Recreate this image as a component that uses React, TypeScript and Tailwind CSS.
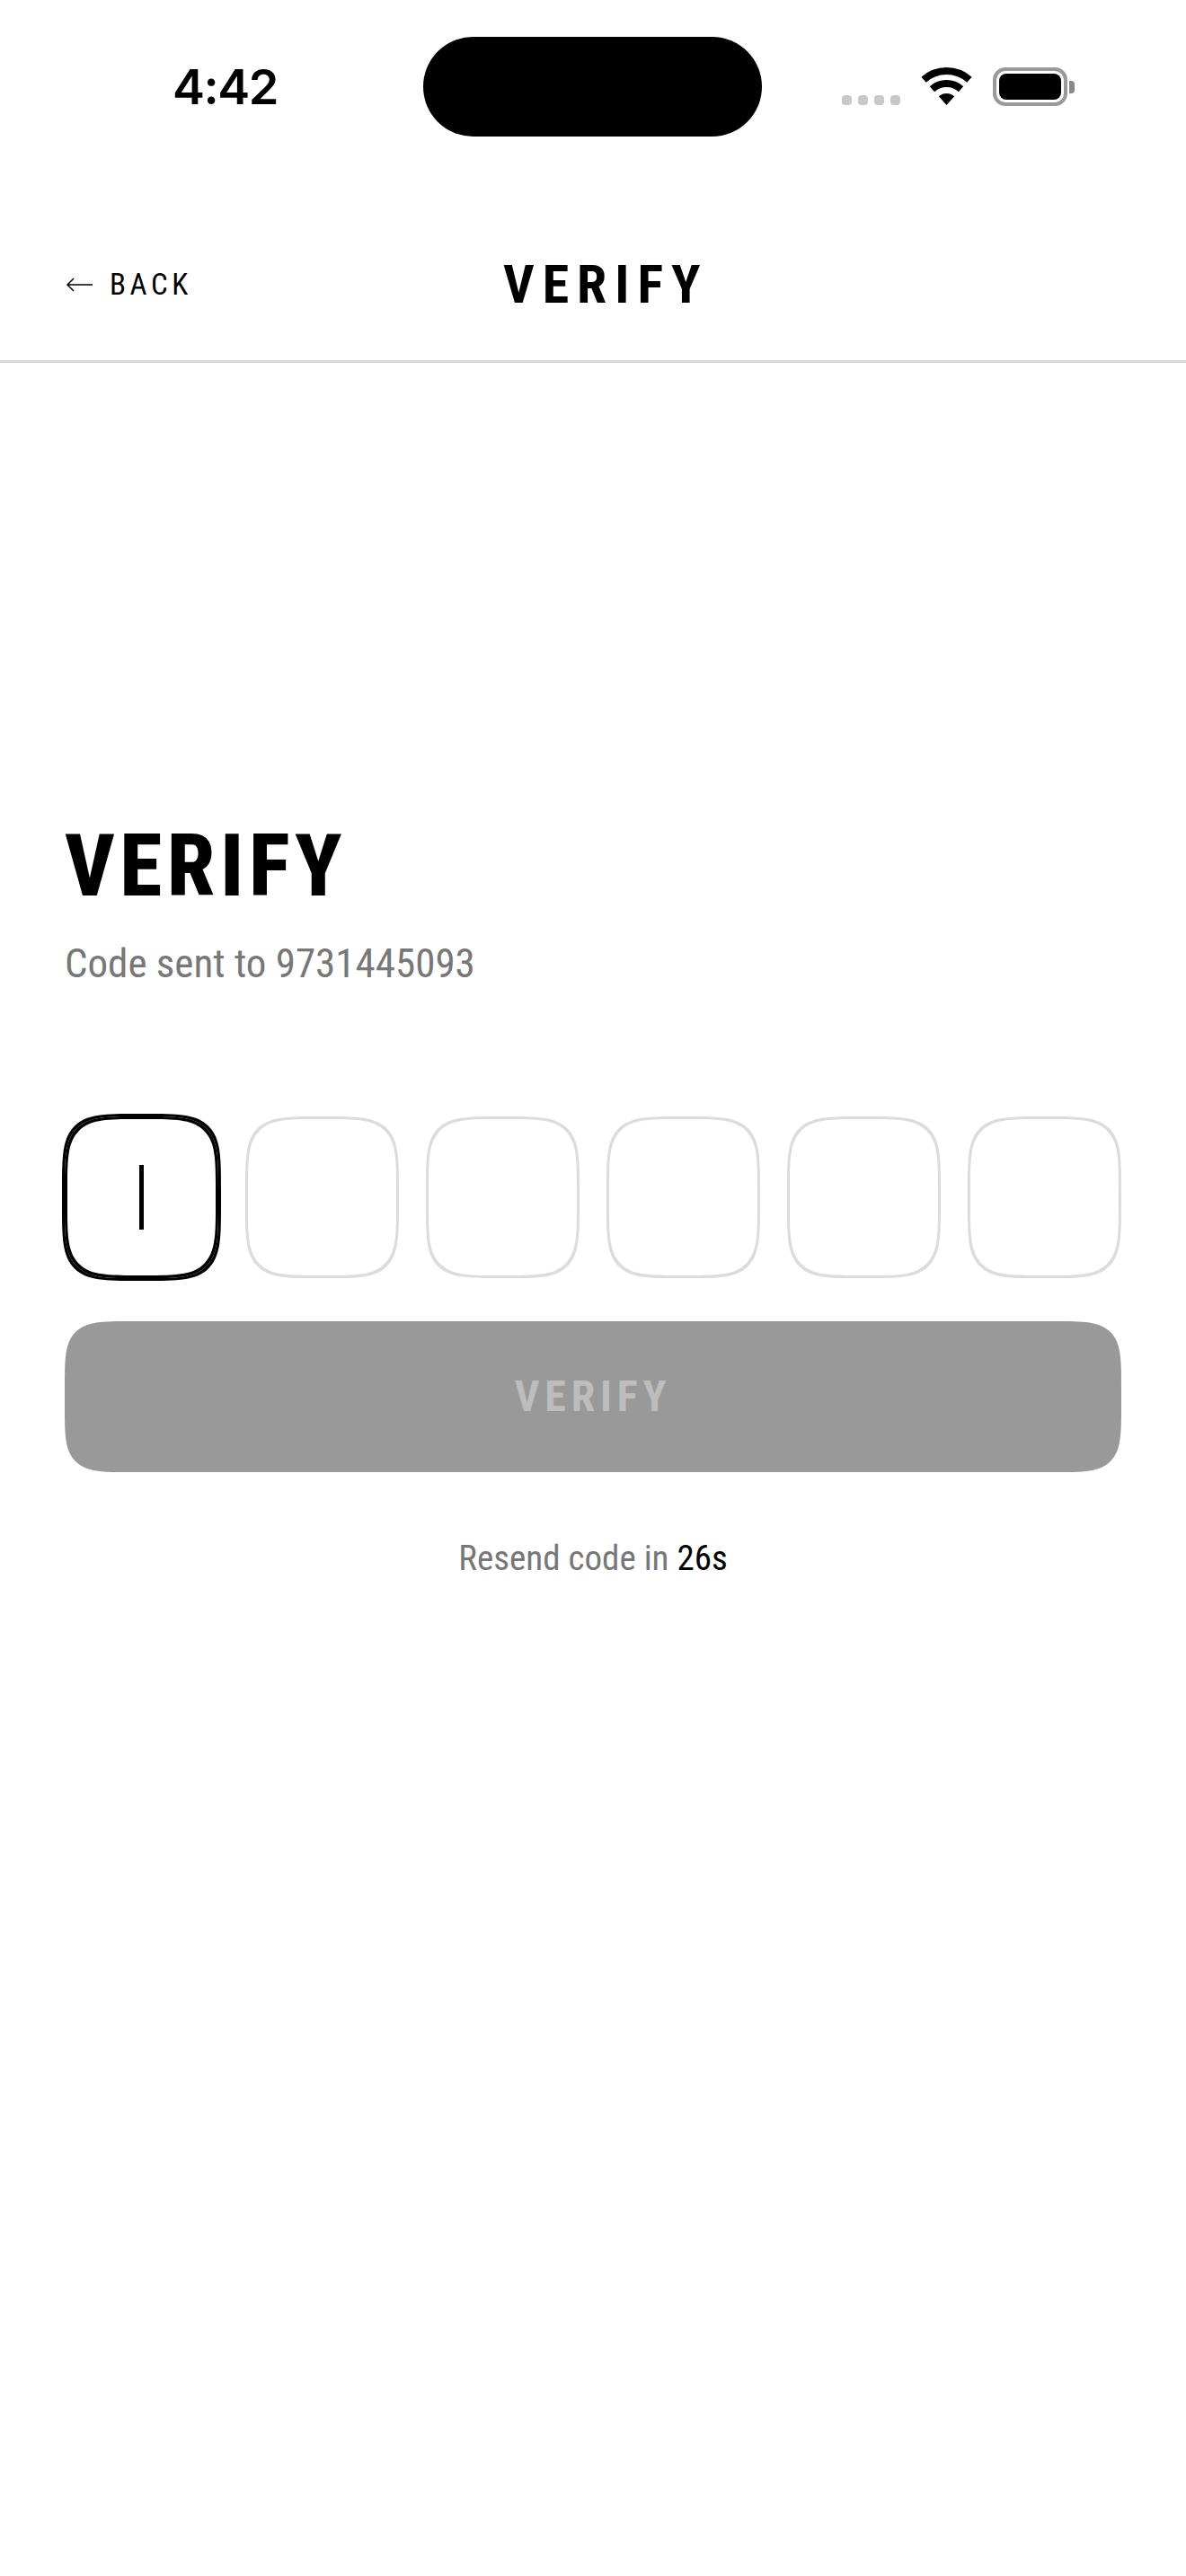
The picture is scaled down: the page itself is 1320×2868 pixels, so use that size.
import React from 'react';

const condensed = 'font-["Roboto_Condensed","Roboto","Liberation_Sans",sans-serif]';

const StatusBar: React.FC = () => (
    <div className="flex h-[152px] items-start">
        <div className="w-[471px] pl-[192px] pt-[61px]">
            <span className='block font-["Inter",sans-serif] text-[54px] font-semibold leading-[72px] tracking-[-1.5px] text-black'>4:42</span>
        </div>
        <div className="mt-[41px] h-[111px] w-[377px] rounded-full bg-black" />
        <div className="flex items-start pl-[89px] pt-[75px]">
            <div className="mt-[31px] flex gap-[7px]">
                {[0, 1, 2, 3].map((dot) => (
                    <span key={dot} className="h-[11px] w-[11px] rounded-[4px] bg-[#c8c8c8]" />
                ))}
            </div>
            <svg className="ml-[23px]" width="57" height="42" viewBox="0 0 57 42" fill="none">
                <path d="M3.1 13.8A38 38 0 0 1 53.9 13.8" stroke="#000" strokeWidth="8" />
                <path d="M12.44 24.2A24 24 0 0 1 44.56 24.2" stroke="#000" strokeWidth="8" />
                <path d="M28.5 42L19.8 32.34A13 13 0 0 1 37.2 32.34Z" fill="#000" />
            </svg>
            <div className="ml-[23px] flex items-center">
                <div className="h-[43px] w-[83px] rounded-[14px] border-[4px] border-[#999] p-[3px]">
                    <div className="h-full w-full rounded-[8px] bg-black" />
                </div>
                <div className="ml-[2px] h-[14px] w-[6px] rounded-r-[4px] bg-[#888]" />
            </div>
        </div>
    </div>
);

const Header: React.FC = () => (
    <header className="flex h-[252px] items-center border-b-[3px] border-[#d6d6d6] pl-[74px] pt-[80px]">
        <div className="flex w-[486px] items-center gap-[19px]">
            <svg width="29" height="16" viewBox="0 0 29 16" fill="none" stroke="#000" strokeWidth="1.5">
                <path d="M29 8H1M8 1L1 8L8 15" />
            </svg>
            <span className={`${condensed} text-[33px] leading-[40px] tracking-[4.6px] text-black`}>BACK</span>
        </div>
        <h2 className={`${condensed} text-[60px] font-bold leading-[80px] tracking-[9px] text-black`}>VERIFY</h2>
    </header>
);

const OtpBox: React.FC<{ active?: boolean }> = ({ active }) => (
    <div
        className={
            active
                ? 'flex h-[180px] w-[171px] items-center justify-center rounded-[84px] border-[3px] border-black outline-[3px] outline-black [corner-shape:squircle]'
                : 'h-[180px] w-[171px] rounded-[84px] border-[3px] border-[#dcdcdc] [corner-shape:squircle]'
        }
    >
        {active && <span className="h-[72px] w-[5px] bg-black" />}
    </div>
);

export default function App() {
    return (
        <div className="h-[2868px] w-[1320px] bg-white">
            <StatusBar />
            <Header />
            <main className="px-[72px] pt-[504px]">
                <h1 className={`${condensed} text-[96px] font-extrabold leading-[112px] tracking-[5.5px] text-black`}>VERIFY</h1>
                <p className={`${condensed} mt-[25px] text-[45px] leading-[56px] text-[#777]`}>Code sent to 9731445093</p>
                <div className="mt-[142px] flex gap-[30px]">
                    <OtpBox active />
                    <OtpBox />
                    <OtpBox />
                    <OtpBox />
                    <OtpBox />
                    <OtpBox />
                </div>
                <button className="mt-[48px] flex h-[168px] w-full items-center justify-center rounded-[76px] bg-[#999] [corner-shape:squircle]">
                    <span className={`${condensed} text-[48px] font-bold tracking-[5.8px] text-[#bdbdbd]`}>VERIFY</span>
                </button>
                <p className={`${condensed} mt-[72px] text-center text-[39px] leading-[48px] text-[#777]`}>
                    Resend code in <span className="text-black">26s</span>
                </p>
            </main>
        </div>
    );
}
